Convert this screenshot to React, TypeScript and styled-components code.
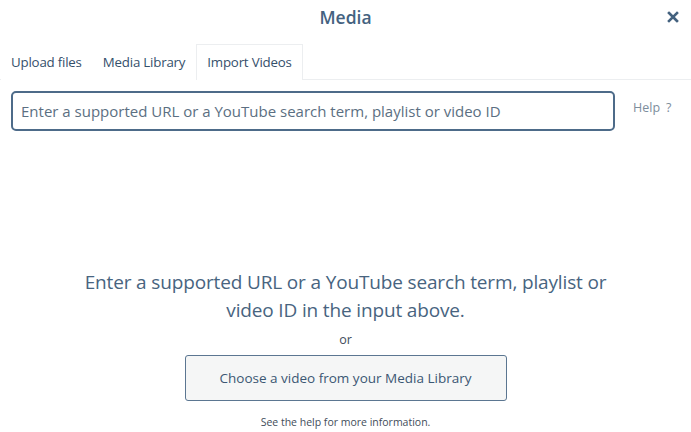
import { createGlobalStyle } from "styled-components";
import styled from "styled-components";

const Global = createGlobalStyle`
  html, body { margin: 0; padding: 0; background: #fff; }
  body { font-family: "Open Sans", "Noto Sans", Arial, sans-serif; color: #3b5773; }
`;

const Modal = styled.div`
  width: 691px;
  height: 432px;
  display: flex;
  flex-direction: column;
  overflow: hidden;
`;

const Header = styled.div`
  height: 33px;
  display: flex;
  align-items: center;
  justify-content: center;
  position: relative;
`;

const Title = styled.h1`
  margin: 0;
  font-size: 17.5px;
  font-weight: 600;
  color: #44627f;
`;

const Close = styled.button`
  position: absolute;
  right: 10px;
  top: 9px;
  width: 16px;
  height: 16px;
  padding: 0;
  border: 0;
  background: none;
  display: flex;
  align-items: center;
  justify-content: center;
`;

const Tabs = styled.div`
  margin-top: 11px;
  display: flex;
  padding-left: 1px;
  border-bottom: 1px solid #eceef0;
  height: 35px;
`;

const Tab = styled.div<{ $active?: boolean }>`
  padding: 0 10px 2px;
  display: flex;
  align-items: center;
  font-size: 13.3px;
  color: #35506b;
  letter-spacing: -0.2px;
  background: #fff;
  border: 1px solid ${(p) => (p.$active ? "#eceef0" : "transparent")};
  border-bottom: none;
  margin-bottom: -1px;
  &:first-child { padding-left: 9px; padding-right: 9px; }
`;

const SearchRow = styled.div`
  display: flex;
  align-items: center;
  padding: 11px 0 0 11px;
`;

const Input = styled.input`
  width: 604px;
  height: 40px;
  box-sizing: border-box;
  border: 2px solid #4d6b89;
  border-radius: 5px;
  padding: 0 8px;
  font-family: inherit;
  font-size: 15px;
  outline: none;
  &::placeholder { color: #5b6f82; }
`;

const Help = styled.a`
  margin-left: 18px;
  margin-top: -7px;
  font-size: 12.5px;
  color: #7d8d9c;
  span { margin-left: 6px; }
`;

const Body = styled.div`
  flex: 1;
  display: flex;
  flex-direction: column;
  align-items: center;
  padding-top: 137px;
`;

const Lead = styled.p`
  margin: 0;
  width: 540px;
  text-align: center;
  font-size: 19px;
  line-height: 28px;
  color: #48647f;
  letter-spacing: -0.15px;
`;

const Or = styled.div`
  margin-top: 7px;
  font-size: 12.5px;
  color: #3f4d5a;
`;

const LibraryButton = styled.button`
  margin-top: 7px;
  width: 322px;
  height: 46px;
  box-sizing: border-box;
  background: #f5f6f6;
  border: 1px solid #5b7691;
  border-radius: 3px;
  font-family: inherit;
  font-size: 13.5px;
  color: #3b5773;
`;

const Note = styled.div`
  margin-top: 14px;
  font-size: 10.5px;
  color: #3f4d5a;
`;

export default function App() {
  return (
    <>
      <Global />
      <Modal>
        <Header>
          <Title>Media</Title>
          <Close aria-label="Close">
            <svg width="12" height="12" viewBox="0 0 12 12">
              <path d="M2 2 L10 10 M10 2 L2 10" stroke="#44627f" strokeWidth="2.6" strokeLinecap="square" />
            </svg>
          </Close>
        </Header>
        <Tabs>
          <Tab>Upload files</Tab>
          <Tab>Media Library</Tab>
          <Tab $active>Import Videos</Tab>
        </Tabs>
        <SearchRow>
          <Input placeholder="Enter a supported URL or a YouTube search term, playlist or video ID" />
          <Help>
            Help<span>?</span>
          </Help>
        </SearchRow>
        <Body>
          <Lead>
            Enter a supported URL or a YouTube search term, playlist or video ID in the input above.
          </Lead>
          <Or>or</Or>
          <LibraryButton>Choose a video from your Media Library</LibraryButton>
          <Note>See the help for more information.</Note>
        </Body>
      </Modal>
    </>
  );
}
